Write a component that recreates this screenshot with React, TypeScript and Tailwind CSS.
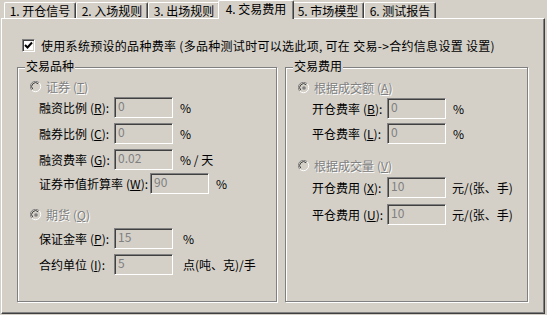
import React from 'react';

const tabs = ['1. 开仓信号', '2. 入场规则', '3. 出场规则', '4. 交易费用', '5. 市场模型', '6. 测试报告'];
const ACTIVE = 3;

const sunken =
  'border border-t-[#808080] border-l-[#808080] border-r-white border-b-white shadow-[inset_1px_1px_0_#404040,inset_-1px_-1px_0_#d4d0c8]';
const grayText = 'text-[#808080] [text-shadow:1px_1px_0_#fff]';

const Radio: React.FC<{ checked?: boolean }> = ({ checked }) => (
  <svg width="12" height="12" viewBox="0 0 12 12" className="shrink-0">
    <circle cx="6" cy="6" r="5" fill="#d4d0c8" />
    <path d="M1.8 9.2 A5 5 0 0 1 9.2 1.8" stroke="#808080" fill="none" />
    <path d="M2.8 8.2 A3.6 3.6 0 0 1 8.2 2.8" stroke="#404040" fill="none" />
    <path d="M9.2 1.8 A5 5 0 0 1 1.8 9.2" stroke="#ffffff" fill="none" />
    {checked && <circle cx="6" cy="6" r="1.8" fill="#808080" />}
  </svg>
);

const RadioRow: React.FC<{ label: string; hot: string; checked?: boolean; className?: string }> = ({ label, hot, checked, className }) => (
  <div className={`flex items-center h-[13px] gap-[4px] ${className ?? ''}`}>
    <Radio checked={checked} />
    <span className={`${grayText} leading-[13px]`}>
      {label}
      <span className="ml-[3px]">
        (<u>{hot}</u>)
      </span>
    </span>
  </div>
);

const Field: React.FC<{ label: string; hot: string; value: string; suffix: string; labelW: string; suffixGap: string; className?: string }> = ({
  label,
  hot,
  value,
  suffix,
  labelW,
  suffixGap,
  className,
}) => (
  <div className={`flex items-center h-[21px] ${className ?? ''}`}>
    <span className={`${labelW} shrink-0 whitespace-nowrap`}>
      {label}
      <span className="ml-[3px]">
        (<u>{hot}</u>):
      </span>
    </span>
    <div className={`w-[59px] h-[21px] ${sunken} bg-[#d4d0c8] text-[#808080] pl-[3px] leading-[16px] shrink-0`}>{value}</div>
    <span className={`${suffixGap} whitespace-nowrap`}>{suffix}</span>
  </div>
);

const Group: React.FC<{ title: string; className: string; children: React.ReactNode }> = ({ title, className, children }) => (
  <div className={`relative border border-[#808080] shadow-[inset_1px_1px_0_#fff,1px_1px_0_#fff] ${className}`}>
    <span className="absolute -top-[9px] left-[7px] bg-[#d4d0c8] px-[1px] leading-[14px]">{title}</span>
    {children}
  </div>
);

export default function App() {
  return (
    <div className="w-[547px] h-[315px] bg-[#d4d0c8] text-[12px] text-black font-['Noto_Sans_CJK_SC',sans-serif] overflow-hidden">
      <div className="flex items-end h-[18px] pl-[4px]">
        {tabs.map((t, i) =>
          i === ACTIVE ? (
            <div
              key={t}
              className="relative z-10 -mx-[2px] -mb-px w-[76px] h-[19px] bg-[#d4d0c8] border-t border-l border-white border-r border-r-[#404040] shadow-[inset_-1px_0_0_#808080] rounded-t-[2px] flex justify-center pt-[1px] leading-[14px] whitespace-nowrap"
            >
              {t}
            </div>
          ) : (
            <div
              key={t}
              className="w-[72px] h-[16px] border-t border-l border-white border-r border-r-[#404040] shadow-[inset_-1px_0_0_#808080] rounded-t-[2px] flex justify-center pt-[1px] leading-[14px] whitespace-nowrap"
            >
              {t}
            </div>
          )
        )}
      </div>

      <div className="ml-[1px] w-[544px] h-[296px] border-t border-l border-white border-r border-b border-r-[#404040] border-b-[#404040] shadow-[inset_-1px_-1px_0_#808080]">
        <div className="flex items-center h-[13px] mt-[20px] ml-[20px] gap-[6px]">
          <div className={`w-[13px] h-[13px] ${sunken} bg-white flex items-center justify-center`}>
            <svg width="9" height="9" viewBox="0 0 9 9">
              <path d="M1 4 L3.5 6.5 L8 1.5" stroke="#000" strokeWidth="2" fill="none" />
            </svg>
          </div>
          <span className="leading-[13px] whitespace-nowrap tracking-[0.3px]">
            使用系统预设的品种费率 (多品种测试时可以选此项, 可在 交易-&gt;合约信息设置 设置)
          </span>
        </div>

        <div className="flex mt-[15px] ml-[15px] gap-[8px]">
          <Group title="交易品种" className="w-[260px] h-[235px] pt-[12px] pl-[12px]">
            <RadioRow label="证券" hot="T" />
            <div className="pl-[9px]">
              <Field label="融资比例" hot="R" value="0" suffix="%" labelW="w-[75px]" suffixGap="ml-[7px]" className="mt-[4px]" />
              <Field label="融券比例" hot="C" value="0" suffix="%" labelW="w-[75px]" suffixGap="ml-[7px]" className="mt-[5px]" />
              <Field label="融资费率" hot="G" value="0.02" suffix="% / 天" labelW="w-[75px]" suffixGap="ml-[7px]" className="mt-[5px]" />
              <Field label="证券市值折算率" hot="W" value="90" suffix="%" labelW="w-[111px]" suffixGap="ml-[7px]" className="mt-[3px]" />
            </div>
            <RadioRow label="期货" hot="Q" checked className="mt-[14px]" />
            <div className="pl-[9px]">
              <Field label="保证金率" hot="P" value="15" suffix="%" labelW="w-[75px]" suffixGap="ml-[10px]" className="mt-[7px]" />
              <Field label="合约单位" hot="I" value="5" suffix="点(吨、克)/手" labelW="w-[75px]" suffixGap="ml-[10px]" className="mt-[5px]" />
            </div>
          </Group>

          <Group title="交易费用" className="w-[243px] h-[235px] pt-[13px] pl-[12px]">
            <RadioRow label="根据成交额" hot="A" checked />
            <div className="pl-[14px]">
              <Field label="开仓费率" hot="B" value="0" suffix="%" labelW="w-[75px]" suffixGap="ml-[7px]" className="mt-[4px]" />
              <Field label="平仓费率" hot="L" value="0" suffix="%" labelW="w-[75px]" suffixGap="ml-[7px]" className="mt-[4px]" />
            </div>
            <RadioRow label="根据成交量" hot="V" className="mt-[15px]" />
            <div className="pl-[14px]">
              <Field label="开仓费用" hot="X" value="10" suffix="元/(张、手)" labelW="w-[75px]" suffixGap="ml-[6px]" className="mt-[5px]" />
              <Field label="平仓费用" hot="U" value="10" suffix="元/(张、手)" labelW="w-[75px]" suffixGap="ml-[6px]" className="mt-[6px]" />
            </div>
          </Group>
        </div>
      </div>
    </div>
  );
}
